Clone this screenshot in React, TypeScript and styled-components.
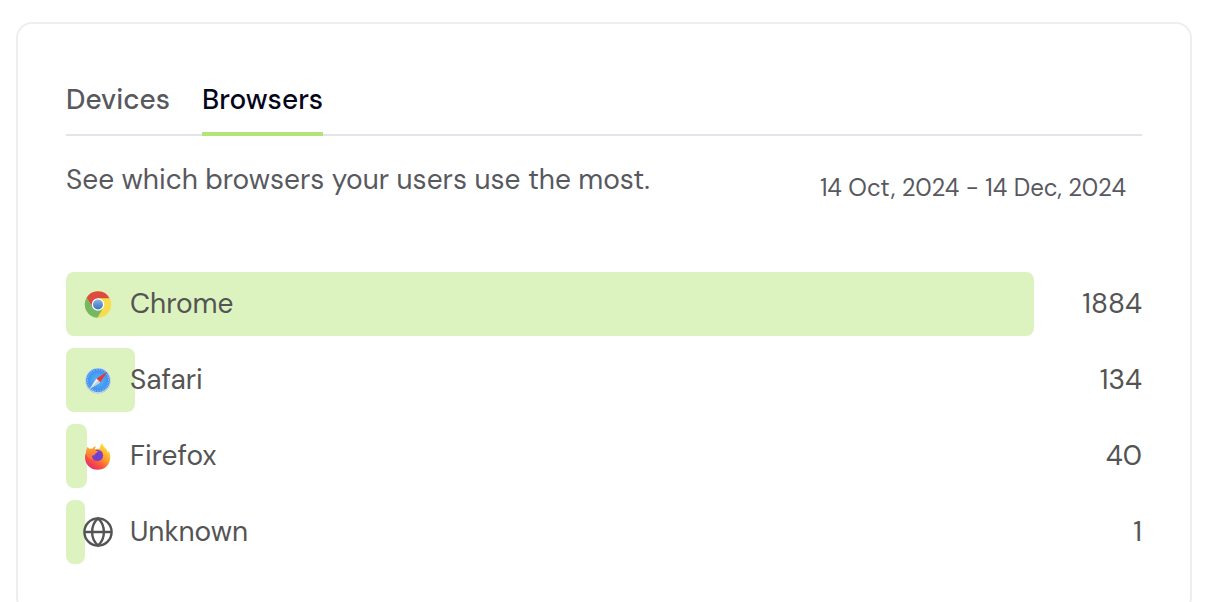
import React, { useState } from "react";
import styled, { createGlobalStyle } from "styled-components";

const GlobalStyle = createGlobalStyle`
  *, *::before, *::after { box-sizing: border-box; }
  body {
    margin: 0;
    background: #fff;
    color: #545454;
    font-family: "DM Sans", Roboto, "Liberation Sans", sans-serif;
    font-size: 28px;
    line-height: 40px;
  }
`;

const Page = styled.main`
  padding: 22px 34px 24px 16px;
`;

const Card = styled.section`
  padding: 48px;
  border: 2px solid #eeeeee;
  border-radius: 16px;
  background: #fff;
`;

const Tabs = styled.div`
  display: flex;
  gap: 32px;
  box-shadow: inset 0 -2px 0 #e2e6eb;
`;

const Tab = styled.button<{ $active: boolean }>`
  padding: 8px 0 12px;
  border: 0;
  border-bottom: 4px solid ${(p) => (p.$active ? "#b2e476" : "transparent")};
  background: none;
  color: ${(p) => (p.$active ? "#05051a" : "#58585f")};
  font: inherit;
  font-weight: 500;
  cursor: pointer;
`;

const Header = styled.div`
  display: flex;
  justify-content: space-between;
  align-items: flex-start;
  margin: 24px 0 56px;
  color: #58595f;
`;

const Description = styled.p`
  margin: 0;
`;

const DateRange = styled.p`
  margin: 0;
  padding: 8px 16px;
  font-size: 24px;
`;

const List = styled.ul`
  display: grid;
  gap: 12px;
  margin: 0;
  padding: 0;
  list-style: none;
`;

const Row = styled.li`
  display: grid;
  grid-template-columns: 1fr 108px;
  align-items: center;
`;

const Track = styled.div`
  display: grid;
  height: 64px;
`;

const Bar = styled.div`
  grid-area: 1 / 1;
  border-radius: 8px;
  background: #dcf3bf;
`;

const Label = styled.div`
  grid-area: 1 / 1;
  display: flex;
  align-items: center;
  gap: 16px;
  padding-left: 16px;
`;

const Icon = styled.svg`
  width: 32px;
  height: 32px;
  flex: none;
`;

const Count = styled.span`
  text-align: right;
`;

const ChromeIcon = () => (
  <Icon viewBox="0 0 32 32" aria-hidden="true">
    <defs>
      <linearGradient id="chrome-core" x1="0" y1="0" x2="0" y2="1">
        <stop offset="0" stopColor="#86b2e4" />
        <stop offset="1" stopColor="#3a74bd" />
      </linearGradient>
    </defs>
    <circle cx="16" cy="16.5" r="13.2" fill="#f7dc4c" />
    <path d="M4.6 9.8A13.2 13.2 0 0 1 27.6 10.3H16l-5.4 9.4z" fill="#dc4b3e" />
    <path d="M4.6 9.8A13.2 13.2 0 0 0 15.4 29.7L21.4 19.6 10.6 19.6z" fill="#75b863" />
    <circle cx="16" cy="16.5" r="6.2" fill="#fff" />
    <circle cx="16" cy="16.5" r="5" fill="url(#chrome-core)" />
  </Icon>
);

const SafariIcon = () => (
  <Icon viewBox="0 0 32 32" aria-hidden="true">
    <defs>
      <radialGradient id="safari-glow">
        <stop offset="0" stopColor="#58bbfa" />
        <stop offset="1" stopColor="#3f8eee" />
      </radialGradient>
    </defs>
    <circle cx="16" cy="16.8" r="12.8" fill="#a7bfc4" />
    <circle cx="16" cy="16.4" r="12.6" fill="#d9e4ea" />
    <circle cx="16" cy="16.4" r="11.9" fill="#3f92ef" />
    <circle cx="16" cy="16.4" r="10.6" fill="url(#safari-glow)" stroke="#9acbfa" strokeWidth="1.3" strokeDasharray="0.6 1.1" />
    <path d="M25.4 7.8 14.4 14.6 18.2 18.4z" fill="#e33a3c" />
    <path d="M7.600 25 14.400 14.600 18.200 18.400z" fill="#eef0f3" />
    <path d="M7.600 25 16.300 16.500 18.200 18.400z" fill="#c5ccd5" />
  </Icon>
);

const FirefoxIcon = () => (
  <Icon viewBox="0 0 32 32" aria-hidden="true">
    <defs>
      <linearGradient id="firefox-body" x1="0.85" y1="0.1" x2="0.25" y2="0.95">
        <stop offset="0" stopColor="#ffe43c" />
        <stop offset="0.4" stopColor="#ffa22c" />
        <stop offset="0.7" stopColor="#fb5a3c" />
        <stop offset="1" stopColor="#e62e66" />
      </linearGradient>
      <linearGradient id="firefox-head" x1="0" y1="0" x2="0" y2="1">
        <stop offset="0" stopColor="#ffa632" />
        <stop offset="1" stopColor="#fd6a38" />
      </linearGradient>
      <radialGradient id="firefox-globe" cx="0.5" cy="0.6">
        <stop offset="0" stopColor="#5f45d6" />
        <stop offset="1" stopColor="#8b3ac4" />
      </radialGradient>
    </defs>
    <path
      d="M5.9 7.1C6.2 8 6.7 8.6 7.2 9c1-.4 2-.4 3 0 1.100-1.600 2.400-2.400 3.900-2.600-1 .9-1.400 1.800-1.500 2.800l5.400-.7c0-2.400.6-4 2.500-5.500.2 3 1.700 4 3.200 5.500 1.300 1.400 1.800 2.600 2.200 4l.5-1.700c1.400 2.300 2 4.400 1.800 7.100C27.700 25 22.800 29.700 15.700 29.700 8.600 29.700 3.100 24.600 3 17.400c0-2 .4-3.700 1.300-5.200.1-1.900.6-3.600 1.600-5.100z"
      fill="url(#firefox-body)"
    />
    <circle cx="15.400" cy="15.400" r="5.700" fill="url(#firefox-globe)" />
    <path
      d="M5.900 7.100c.3.900.8 1.500 1.300 1.900 1-.4 2-.4 3 0 1.100-1.600 2.400-2.400 3.900-2.600-1.200 1.300-1.700 2.300-1.400 3.300.7.900 2 1.200 3.100 1.400.2 1.200-.9 1.700-2.300 2.300-1 .5-.9 1.300-.7 2-1.600-.3-2.600.2-2.900 1.200.2 1.200.8 2.300 1.700 3-3.400.4-6.400-1.500-7.100-5-.7-2.700-.1-5.100 1.400-7.500z"
      fill="url(#firefox-head)"
    />
  </Icon>
);

const GlobeIcon = () => (
  <Icon viewBox="0 0 32 32" fill="none" stroke="#545454" strokeWidth="2.4" aria-hidden="true">
    <circle cx="16" cy="16" r="13.600" />
    <path d="M16 2.400C12 6 10.100 10.500 10.100 16s1.900 10 5.900 13.600c4-3.600 5.900-8.100 5.900-13.600S20 6 16 2.400zM2.400 16h27.200" />
  </Icon>
);

const browsers = [
  { name: "Chrome", count: 1884, icon: <ChromeIcon /> },
  { name: "Safari", count: 134, icon: <SafariIcon /> },
  { name: "Firefox", count: 40, icon: <FirefoxIcon /> },
  { name: "Unknown", count: 1, icon: <GlobeIcon /> },
];

const tabs = ["Devices", "Browsers"];

// Small counts still get a visible sliver of bar.
const barWidth = (count: number) =>
  `${Math.max(2, (count / browsers[0].count) * 100)}%`;

export default function App() {
  const [active, setActive] = useState("Browsers");

  return (
    <>
      <GlobalStyle />
      <Page>
        <Card>
          <Tabs role="tablist">
            {tabs.map((tab) => (
              <Tab
                key={tab}
                type="button"
                role="tab"
                aria-selected={tab === active}
                $active={tab === active}
                onClick={() => setActive(tab)}
              >
                {tab}
              </Tab>
            ))}
          </Tabs>
          <Header>
            <Description>See which browsers your users use the most.</Description>
            <DateRange>14 Oct, 2024 - 14 Dec, 2024</DateRange>
          </Header>
          <List>
            {browsers.map(({ name, count, icon }) => (
              <Row key={name}>
                <Track>
                  <Bar style={{ width: barWidth(count) }} />
                  <Label>
                    {icon}
                    {name}
                  </Label>
                </Track>
                <Count>{count}</Count>
              </Row>
            ))}
          </List>
        </Card>
      </Page>
    </>
  );
}
